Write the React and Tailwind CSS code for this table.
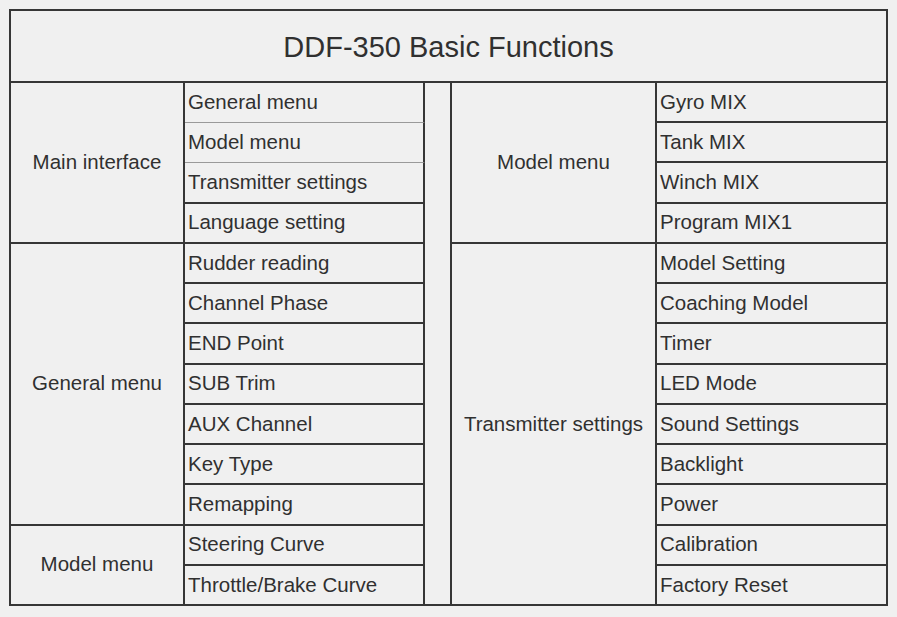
export default function App() {
  const col2 = [
    "General menu",
    "Model menu",
    "Transmitter settings",
    "Language setting",
    "Rudder reading",
    "Channel Phase",
    "END Point",
    "SUB Trim",
    "AUX Channel",
    "Key Type",
    "Remapping",
    "Steering Curve",
    "Throttle/Brake Curve",
  ];
  const col5 = [
    "Gyro MIX",
    "Tank MIX",
    "Winch MIX",
    "Program MIX1",
    "Model Setting",
    "Coaching Model",
    "Timer",
    "LED Mode",
    "Sound Settings",
    "Backlight",
    "Power",
    "Calibration",
    "Factory Reset",
  ];
  const rowStart = [
    "row-start-2",
    "row-start-3",
    "row-start-4",
    "row-start-5",
    "row-start-6",
    "row-start-7",
    "row-start-8",
    "row-start-9",
    "row-start-10",
    "row-start-11",
    "row-start-12",
    "row-start-13",
    "row-start-14",
  ];
  return (
    <div
      className="min-h-screen w-full bg-[#f0f0f0] pt-[9px] pl-[9px] text-[#303030]"
      style={{ fontFamily: '"Liberation Sans", Arial, sans-serif' }}
    >
      <div className="grid h-[597px] w-[879px] grid-cols-[174px_240px_27px_205px_231px] grid-rows-[72px_repeat(13,1fr)] border-l-2 border-t-2 border-[#363636]">
        <div className="col-span-5 col-start-1 row-start-1 flex items-center justify-center border-b-2 border-r-2 border-[#363636] pt-[4px] text-[29px]">
          DDF-350 Basic Functions
        </div>

        <div className="col-start-1 row-span-4 row-start-2 flex items-center justify-center border-b-2 border-r-2 border-[#363636] text-[20.5px]">
          Main interface
        </div>
        <div className="col-start-1 row-span-7 row-start-6 flex items-center justify-center border-b-2 border-r-2 border-[#363636] text-[20.5px]">
          General menu
        </div>
        <div className="col-start-1 row-span-2 row-start-13 flex items-center justify-center border-b-2 border-r-2 border-[#363636] text-[20.5px]">
          Model menu
        </div>

        {col2.map((t, i) => (
          <div
            key={t}
            className={`col-start-2 ${rowStart[i]} flex items-center border-r-2 pl-[3px] text-[20.5px] border-[#363636] ${
              i < 2 ? "border-b border-b-[#9a9a9a]" : "border-b-2"
            }`}
          >
            {t}
          </div>
        ))}

        <div className="col-start-3 row-span-13 row-start-2 border-b-2 border-r-2 border-[#363636]" />

        <div className="col-start-4 row-span-4 row-start-2 flex items-center justify-center border-b-2 border-r-2 border-[#363636] text-[20.5px]">
          Model menu
        </div>
        <div className="col-start-4 row-span-9 row-start-6 flex items-center justify-center border-b-2 border-r-2 border-[#363636] text-[20.5px]">
          Transmitter settings
        </div>

        {col5.map((t, i) => (
          <div
            key={t}
            className={`col-start-5 ${rowStart[i]} flex items-center border-b-2 border-r-2 border-[#363636] pl-[3px] text-[20.5px]`}
          >
            {t}
          </div>
        ))}
      </div>
    </div>
  );
}
